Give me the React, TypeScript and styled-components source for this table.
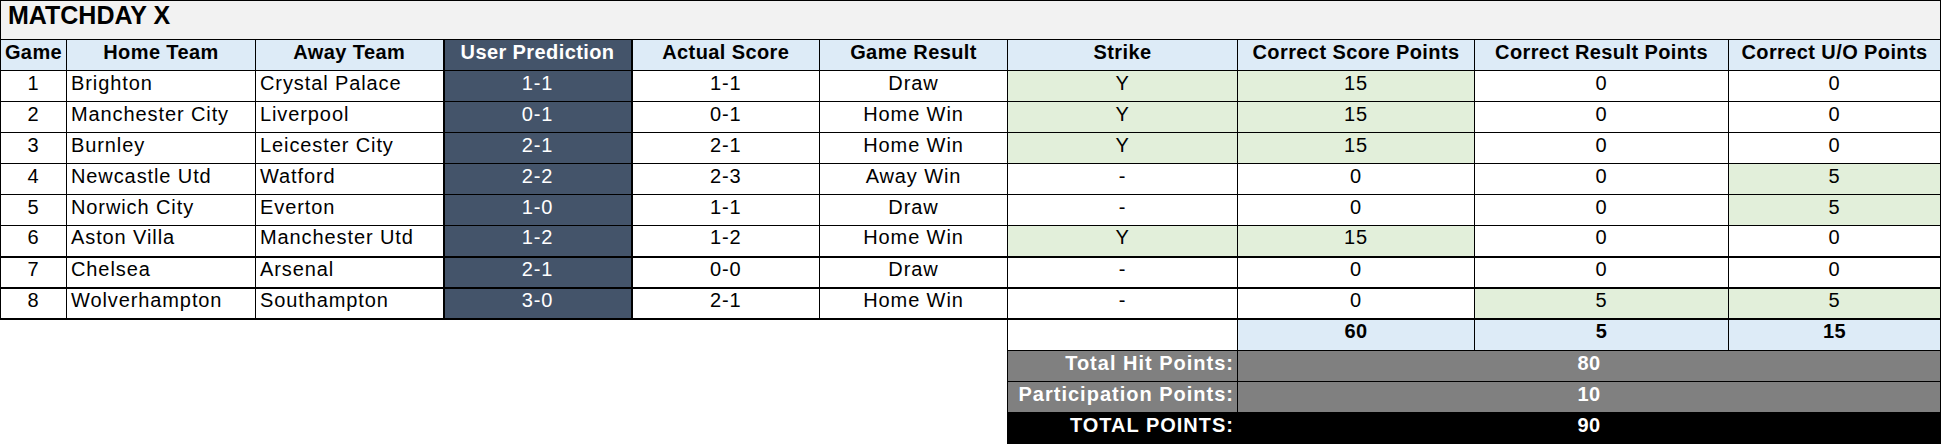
import styled, { createGlobalStyle } from "styled-components";

type Tone = "white" | "green" | "dark" | "blue";

const GlobalStyle = createGlobalStyle`
  body {
    margin: 0;
    background: #ffffff;
    font-family: "Liberation Sans", Arial, sans-serif;
  }
`;

const games = [
	{ n: 1, home: "Brighton", away: "Crystal Palace", pred: "1-1", actual: "1-1", result: "Draw", strike: "Y", cs: 15, cr: 0, uo: 0 },
	{ n: 2, home: "Manchester City", away: "Liverpool", pred: "0-1", actual: "0-1", result: "Home Win", strike: "Y", cs: 15, cr: 0, uo: 0 },
	{ n: 3, home: "Burnley", away: "Leicester City", pred: "2-1", actual: "2-1", result: "Home Win", strike: "Y", cs: 15, cr: 0, uo: 0 },
	{ n: 4, home: "Newcastle Utd", away: "Watford", pred: "2-2", actual: "2-3", result: "Away Win", strike: "-", cs: 0, cr: 0, uo: 5 },
	{ n: 5, home: "Norwich City", away: "Everton", pred: "1-0", actual: "1-1", result: "Draw", strike: "-", cs: 0, cr: 0, uo: 5 },
	{ n: 6, home: "Aston Villa", away: "Manchester Utd", pred: "1-2", actual: "1-2", result: "Home Win", strike: "Y", cs: 15, cr: 0, uo: 0 },
	{ n: 7, home: "Chelsea", away: "Arsenal", pred: "2-1", actual: "0-0", result: "Draw", strike: "-", cs: 0, cr: 0, uo: 0 },
	{ n: 8, home: "Wolverhampton", away: "Southampton", pred: "3-0", actual: "2-1", result: "Home Win", strike: "-", cs: 0, cr: 5, uo: 5 },
];

const colWidths = [66, 189, 188, 188, 188, 188, 230, 237, 254, 212];

const headers = [
	"Game",
	"Home Team",
	"Away Team",
	"User Prediction",
	"Actual Score",
	"Game Result",
	"Strike",
	"Correct Score Points",
	"Correct Result Points",
	"Correct U/O Points",
];

const summary = [
	{ label: "Total Hit Points:", value: 80, dark: false },
	{ label: "Participation Points:", value: 10, dark: false },
	{ label: "TOTAL POINTS:", value: 90, dark: true },
];

export default function App() {
	const sum = (k: "cs" | "cr" | "uo") => games.reduce((a, g) => a + g[k], 0);

	return (
		<>
			<GlobalStyle />
			<Sheet>
				<colgroup>
					{colWidths.map((w, i) => (
						<col key={i} style={{ width: w }} />
					))}
				</colgroup>
				<tbody>
					<tr>
						<TitleCell colSpan={10}>MATCHDAY X</TitleCell>
					</tr>
					<tr>
						{headers.map((h, i) => (
							<HeadCell key={h} $tone={i === 3 ? "dark" : "blue"} $pred={i === 3}>
								{h}
							</HeadCell>
						))}
					</tr>
					{games.map((g) => {
						const thick = g.n >= 6;
						return (
							<tr key={g.n}>
								<Cell $thick={thick}>{g.n}</Cell>
								<Cell $thick={thick} $left>{g.home}</Cell>
								<Cell $thick={thick} $left>{g.away}</Cell>
								<Cell $thick={thick} $tone="dark" $pred>{g.pred}</Cell>
								<Cell $thick={thick}>{g.actual}</Cell>
								<Cell $thick={thick}>{g.result}</Cell>
								<Cell $thick={thick} $tone={g.strike === "Y" ? "green" : "white"}>{g.strike}</Cell>
								<Cell $thick={thick} $tone={g.cs > 0 ? "green" : "white"}>{g.cs}</Cell>
								<Cell $thick={thick} $tone={g.cr > 0 ? "green" : "white"}>{g.cr}</Cell>
								<Cell $thick={thick} $tone={g.uo > 0 ? "green" : "white"}>{g.uo}</Cell>
							</tr>
						);
					})}
					<tr>
						<Spacer colSpan={6} />
						<Cell />
						<Cell $tone="blue" $bold>{sum("cs")}</Cell>
						<Cell $tone="blue" $bold>{sum("cr")}</Cell>
						<Cell $tone="blue" $bold>{sum("uo")}</Cell>
					</tr>
					{summary.map((s) => (
						<tr key={s.label}>
							<Spacer colSpan={6} />
							<SumLabel $dark={s.dark}>{s.label}</SumLabel>
							<SumValue $dark={s.dark} colSpan={3}>
								{s.value}
							</SumValue>
						</tr>
					))}
				</tbody>
			</Sheet>
		</>
	);
}

const toneBg: Record<Tone, string> = {
	white: "#ffffff",
	green: "#e2efda",
	dark: "#44546a",
	blue: "#ddebf7",
};

const Sheet = styled.table`
	width: 1940px;
	table-layout: fixed;
	border-collapse: collapse;
	font-family: "Liberation Sans", Arial, sans-serif;
	color: #000000;
`;

const TitleCell = styled.td`
	height: 38px;
	box-sizing: border-box;
	padding: 0 7px 9px;
	background: #f2f2f2;
	border: 1px solid #000000;
	font-size: 25px;
	font-weight: 700;
	text-align: left;
	vertical-align: middle;
`;

const HeadCell = styled.td<{ $tone: Tone; $pred?: boolean }>`
	height: 31px;
	box-sizing: border-box;
	padding: 0 2px 6px;
	background: ${(p) => toneBg[p.$tone]};
	color: ${(p) => (p.$tone === "dark" ? "#ffffff" : "#000000")};
	border: 1px solid #000000;
	border-left-width: ${(p) => (p.$pred ? "2px" : "1px")};
	border-right-width: ${(p) => (p.$pred ? "2px" : "1px")};
	font-size: 20px;
	font-weight: 700;
	letter-spacing: 0.4px;
	text-align: center;
	white-space: nowrap;
	overflow: hidden;
`;

const Cell = styled.td<{ $tone?: Tone; $left?: boolean; $thick?: boolean; $pred?: boolean; $bold?: boolean }>`
	height: 31px;
	box-sizing: border-box;
	padding: ${(p) => (p.$left ? "0 4px 6px 4px" : "0 2px 6px")};
	background: ${(p) => toneBg[p.$tone ?? "white"]};
	color: ${(p) => (p.$tone === "dark" ? "#ffffff" : "#000000")};
	border: 1px solid #000000;
	border-bottom-width: ${(p) => (p.$thick ? "2px" : "1px")};
	border-left-width: ${(p) => (p.$pred ? "2px" : "1px")};
	border-right-width: ${(p) => (p.$pred ? "2px" : "1px")};
	font-size: 20px;
	font-weight: ${(p) => (p.$bold ? 700 : 400)};
	letter-spacing: ${(p) => (p.$bold ? "0.4px" : "0.9px")};
	text-align: ${(p) => (p.$left ? "left" : "center")};
	white-space: nowrap;
	overflow: hidden;
`;

const Spacer = styled.td`
	height: 31px;
	border: none;
	padding: 0;
	background: #ffffff;
`;

const SumLabel = styled.td<{ $dark: boolean }>`
	height: 31px;
	box-sizing: border-box;
	padding: 0 3px 6px 2px;
	background: ${(p) => (p.$dark ? "#000000" : "#808080")};
	color: #ffffff;
	border: 1px solid #000000;
	font-size: 20px;
	font-weight: 700;
	letter-spacing: 1px;
	text-align: right;
	white-space: nowrap;
	overflow: hidden;
`;

const SumValue = styled.td<{ $dark: boolean }>`
	height: 31px;
	box-sizing: border-box;
	padding: 0 2px 6px;
	background: ${(p) => (p.$dark ? "#000000" : "#808080")};
	color: #ffffff;
	border: 1px solid #000000;
	font-size: 20px;
	font-weight: 700;
	letter-spacing: 0.4px;
	text-align: center;
`;
